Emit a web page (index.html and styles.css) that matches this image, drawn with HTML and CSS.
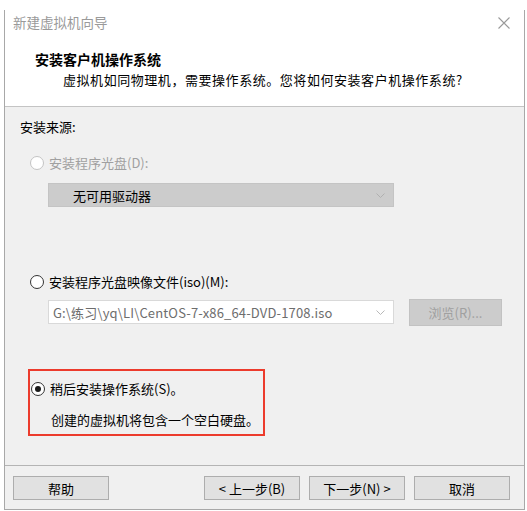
FILE: index.html
```html
<!DOCTYPE html>
<html lang="zh-CN">
<head>
<meta charset="utf-8">
<title>新建虚拟机向导</title>
<link rel="stylesheet" href="styles.css">
</head>
<body>
<div class="dialog">
  <div class="titlebar">
    <span class="title">新建虚拟机向导</span>
    <svg class="close" width="12" height="12" viewBox="0 0 12 12"><path d="M0.5 0.5 L11.5 11.5 M11.5 0.5 L0.5 11.5" stroke="#9a9a9a" stroke-width="1.1" fill="none"/></svg>
  </div>
  <div class="header">
    <div class="h-title">安装客户机操作系统</div>
    <div class="h-sub">虚拟机如同物理机，需要操作系统。您将如何安装客户机操作系统?</div>
  </div>
  <div class="body">
    <div class="label">安装来源:</div>
    <div class="radio-row disabled r1">
      <span class="radio"></span><span>安装程序光盘(D):</span>
    </div>
    <div class="select-disabled">
      <span class="sel-text">无可用驱动器</span>
      <svg class="chev" width="9" height="5" viewBox="0 0 9 5"><path d="M0.5 0.5 L4.5 4.5 L8.5 0.5" stroke="#b0b0b0" fill="none"/></svg>
    </div>
    <div class="radio-row r2">
      <span class="radio"></span><span>安装程序光盘映像文件(iso)(M):</span>
    </div>
    <div class="iso-row">
      <div class="combo">
        <span class="combo-text">G:\练习\yq\LI\CentOS-7-x86_64-DVD-1708.iso</span>
        <svg class="chev" width="9" height="5" viewBox="0 0 9 5"><path d="M0.5 0.5 L4.5 4.5 L8.5 0.5" stroke="#b8b8b8" fill="none"/></svg>
      </div>
      <div class="browse">浏览(R)...</div>
    </div>
    <div class="later">
      <div class="radio-row r3">
        <span class="radio checked"></span><span>稍后安装操作系统(S)。</span>
      </div>
      <div class="later-desc">创建的虚拟机将包含一个空白硬盘。</div>
    </div>
  </div>
  <div class="footer">
    <div class="btn">帮助</div>
    <div class="spacer"></div>
    <div class="btn">&lt; 上一步(B)</div>
    <div class="btn">下一步(N) &gt;</div>
    <div class="btn">取消</div>
  </div>
</div>
</body>
</html>
```
FILE: styles.css
```css
html, body {
  margin: 0;
  padding: 0;
  background: #ffffff;
}
body {
  font-family: "Noto Sans CJK SC", "Noto Sans", sans-serif;
  font-size: 13px;
  color: #000;
}
.dialog {
  margin: 10px 0 0 4px;
  width: 519px;
  border-left: 1px solid #a8a8a8;
  border-right: 1px solid #a8a8a8;
  border-bottom: 1px solid #a8a8a8;
  display: flex;
  flex-direction: column;
}
.titlebar {
  height: 24px;
  display: flex;
  align-items: center;
  padding-left: 8px;
  padding-right: 14px;
  background: #fff;
}
.title {
  font-size: 13.5px;
  color: #9a9a9a;
  line-height: 24px;
  flex: 1;
}
.close {
  margin-top: 1px;
}
.header {
  background: #fff;
  border-bottom: 1px solid #c4c4c4;
  padding-top: 15px;
  box-sizing: border-box;
  height: 73px;
}
.h-title {
  font-size: 14px;
  font-weight: bold;
  line-height: 20px;
  padding-left: 30px;
}
.h-sub {
  font-size: 13px;
  line-height: 20px;
  margin-top: 1px;
  padding-left: 58px;
  letter-spacing: 0.55px;
}
.body {
  height: 358px;
  box-sizing: border-box;
  background: #f0f0f0;
  padding: 10px 0 0 15px;
  display: flex;
  flex-direction: column;
  align-items: flex-start;
}
.label {
  line-height: 20px;
}
.radio-row {
  display: flex;
  align-items: center;
  line-height: 20px;
  margin-left: 10px;
  gap: 5px;
}
.radio-row.disabled {
  color: #a0a0a0;
}
.r1 { margin-top: 16px; }
.r2 { margin-top: 65px; }
.radio {
  width: 12px;
  height: 12px;
  border-radius: 50%;
  border: 1px solid #333;
  background: #fff;
  box-sizing: content-box;
  display: inline-block;
  position: relative;
}
.disabled .radio {
  border-color: #c4c4c4;
}
.radio.checked::after {
  content: "";
  position: absolute;
  left: 3px;
  top: 3px;
  width: 6px;
  height: 6px;
  border-radius: 50%;
  background: #1a1a1a;
}
.select-disabled {
  margin-top: 10px;
  margin-left: 28px;
  width: 346px;
  height: 24px;
  box-sizing: border-box;
  background: #cccccc;
  border: 1px solid #c4c4c4;
  display: flex;
  align-items: center;
  padding-left: 24px;
  padding-right: 8px;
}
.sel-text { flex: 1; }
.iso-row {
  margin-top: 7px;
  margin-left: 28px;
  display: flex;
  align-items: flex-start;
  gap: 15px;
}
.combo {
  margin-top: 1px;
  width: 346px;
  height: 24px;
  box-sizing: border-box;
  background: #fff;
  border: 1px solid #d9d9d9;
  display: flex;
  align-items: center;
  padding-left: 4px;
  padding-right: 8px;
}
.combo-text {
  flex: 1;
  color: #6d6d6d;
  letter-spacing: 0.15px;
}
.browse {
  width: 93px;
  height: 27px;
  box-sizing: border-box;
  background: #cccccc;
  border: 1px solid #c2c2c2;
  color: #a0a0a0;
  display: flex;
  align-items: center;
  justify-content: center;
}
.later {
  margin-top: 43px;
  margin-left: 8px;
  width: 237px;
  box-sizing: border-box;
  border: 2px solid #ec3b2c;
  padding: 8px 0 4px 1px;
}
.later .radio-row {
  margin-left: 0;
}
.later-desc {
  margin-top: 11px;
  line-height: 20px;
  padding-left: 20px;
}
.footer {
  height: 44px;
  box-sizing: border-box;
  border-top: 1px solid #b4b4b4;
  background: #f0f0f0;
  display: flex;
  align-items: flex-start;
  padding: 10px 0 0 8px;
  gap: 9px;
}
.spacer {
  width: 77px;
}
.btn {
  width: 96px;
  height: 24px;
  box-sizing: border-box;
  background: #e1e1e1;
  border: 1px solid #adadad;
  display: flex;
  align-items: center;
  justify-content: center;
}
```
